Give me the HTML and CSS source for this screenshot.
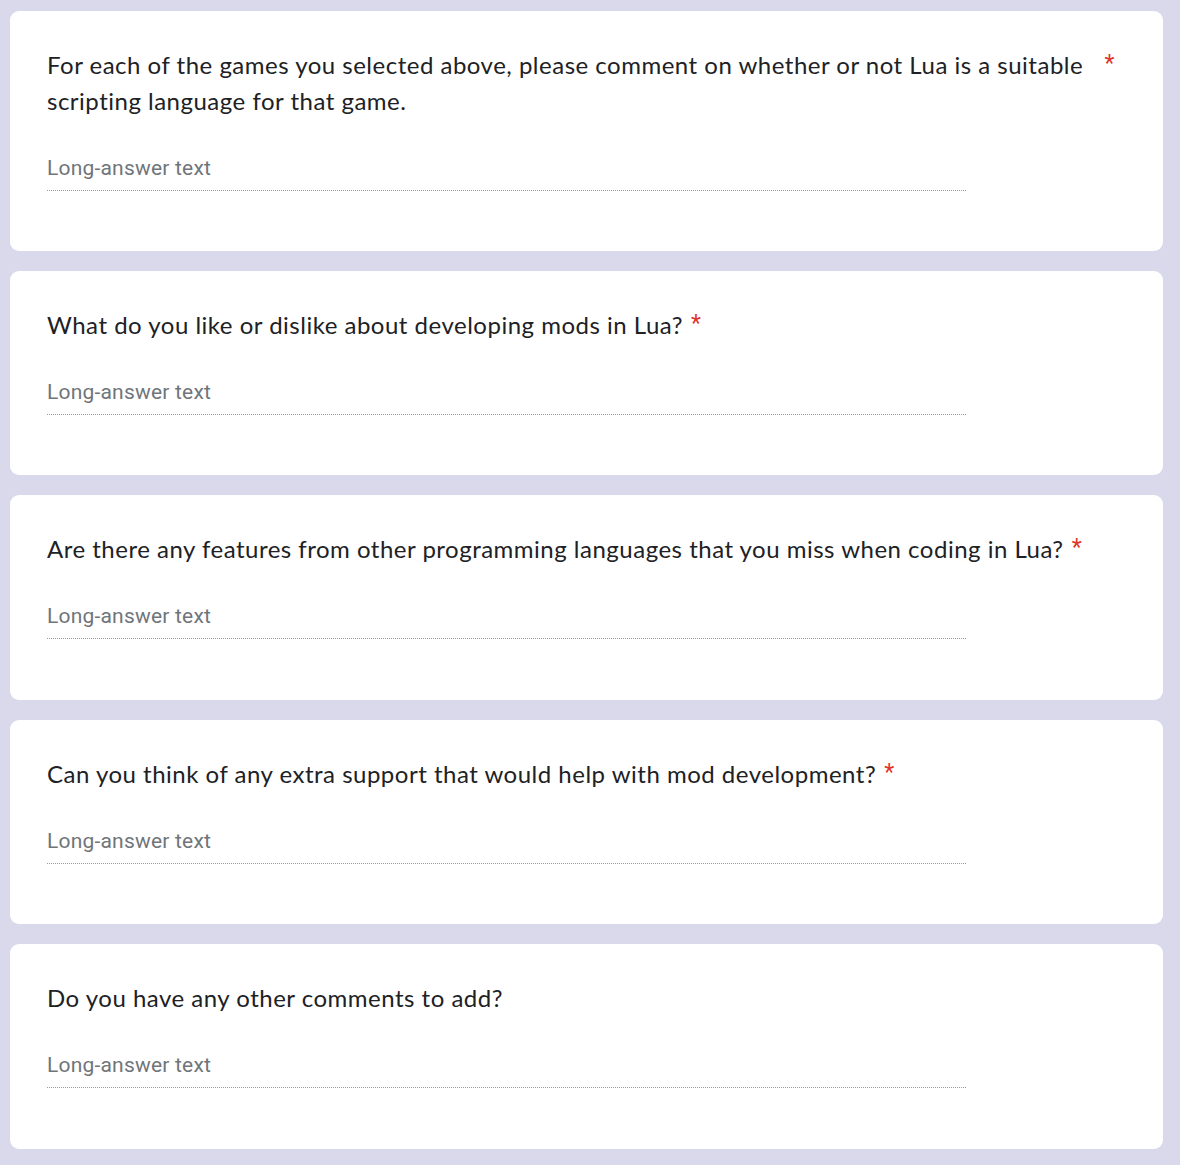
FILE: index.html
```html
<!DOCTYPE html>
<html lang="en">
<head>
<meta charset="utf-8">
<title>Form</title>
<link rel="stylesheet" href="styles.css">
</head>
<body>
<main class="form">
  <section class="card card-first">
    <div class="title"><span class="text">For each of the games you selected above, please comment on whether or not Lua is a suitable scripting language for that game.</span><span class="req">*</span></div>
    <div class="answer">Long-answer text</div>
  </section>
  <section class="card">
    <div class="title"><span class="text">What do you like or dislike about developing mods in Lua?</span><span class="req">*</span></div>
    <div class="answer">Long-answer text</div>
  </section>
  <section class="card">
    <div class="title"><span class="text">Are there any features from other programming languages that you miss when coding in Lua?</span><span class="req">*</span></div>
    <div class="answer">Long-answer text</div>
  </section>
  <section class="card">
    <div class="title"><span class="text">Can you think of any extra support that would help with mod development?</span><span class="req">*</span></div>
    <div class="answer">Long-answer text</div>
  </section>
  <section class="card">
    <div class="title"><span class="text">Do you have any other comments to add?</span></div>
    <div class="answer">Long-answer text</div>
  </section>
</main>
</body>
</html>
```
FILE: styles.css
```css
html, body {
  margin: 0;
  padding: 0;
  background: #d9d9eb;
}
.form {
  display: flex;
  flex-direction: column;
  gap: 20px;
  padding: 11px 17px 16px 10px;
}
.card {
  background: #ffffff;
  border-radius: 9px;
  padding: 36px 48px 60.4px 37px;
}
.card-first {
  padding-bottom: 60px;
}
.title {
  display: flex;
  align-items: flex-start;
  font-family: "Lato", "Open Sans", sans-serif;
  font-size: 24px;
  line-height: 36px;
  letter-spacing: 0.5px;
  color: #202124;
}
.text {
  flex: 0 1 auto;
}
.req {
  flex: none;
  font-family: "Roboto", sans-serif;
  font-size: 23px;
  line-height: 34px;
  color: #e0352b;
  padding-left: 8px;
}
.answer {
  width: 919px;
  margin-top: 34px;
  padding-bottom: 7px;
  border-bottom: 1px dotted #9a9a9a;
  font-family: "Roboto", sans-serif;
  font-size: 21px;
  line-height: 30px;
  color: #70757a;
  letter-spacing: 0.2px;
}
```
